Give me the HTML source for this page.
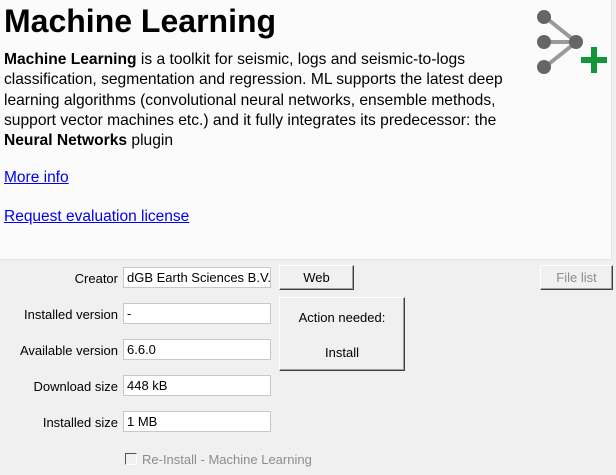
<!DOCTYPE html>
<html><head><style>
body{margin:0;width:616px;height:475px;background:#f0f0f0;font-family:"Liberation Sans",sans-serif;position:relative;overflow:hidden}
#top{position:absolute;left:0;top:0;width:611px;height:259px;background:#fbfbfb;border-right:1px solid #e3e3e3;border-bottom:1px solid #e3e3e3}
h1{position:absolute;left:4px;top:3px;margin:0;font-size:32px;font-weight:bold;color:#000}
.p{position:absolute;left:4px;top:50px;width:515px;font-size:15.6px;line-height:20.3px;color:#000}
a{color:#0000ee;text-decoration:underline;font-size:15.5px;position:absolute;left:4px}
.lab{position:absolute;right:498px;font-size:13px;color:#000;text-align:right}
.in{position:absolute;left:123px;width:143px;height:19px;background:#fff;border:1px solid #c8c8c8;font-size:13px;line-height:19px;padding-left:3px;overflow:hidden;white-space:nowrap}
.btn{position:absolute;background:#f0f0f0;border:1px solid;border-color:#fff #404040 #404040 #fff;box-shadow:inset -1px -1px #a0a0a0;font-size:13px;text-align:center}
</style></head><body>
<div id="top">
<h1>Machine Learning</h1>
<div class="p"><b>Machine Learning</b> is a toolkit for seismic, logs and seismic-to-logs classification, segmentation and regression. ML supports the latest deep learning algorithms (convolutional neural networks, ensemble methods, support vector machines etc.) and it fully integrates its predecessor: the <b>Neural Networks</b> plugin</div>
<a style="top:169px">More info</a>
<a style="top:208px">Request evaluation license</a>
<svg style="position:absolute;left:530px;top:5px" width="80" height="75">
<g stroke="#999" stroke-width="4"><line x1="15" y1="12" x2="45" y2="36"/><line x1="15" y1="37" x2="45" y2="37"/><line x1="15" y1="62" x2="45" y2="38"/></g>
<g fill="#666"><circle cx="14" cy="12" r="7"/><circle cx="14" cy="37" r="7"/><circle cx="14" cy="62" r="7"/><circle cx="46" cy="37" r="7"/></g>
<path d="M61 42h6v10h10v6h-10v10h-6v-10h-10v-6h10z" fill="#11963a"/>
</svg>
</div>
<div class="lab" style="top:271px">Creator</div>
<div class="lab" style="top:307px">Installed version</div>
<div class="lab" style="top:343px">Available version</div>
<div class="lab" style="top:379px">Download size</div>
<div class="lab" style="top:415px">Installed size</div>
<div class="in" style="top:267px">dGB Earth Sciences B.V.</div>
<div class="in" style="top:303px">-</div>
<div class="in" style="top:339px">6.6.0</div>
<div class="in" style="top:375px">448 kB</div>
<div class="in" style="top:411px">1 MB</div>
<div class="btn" style="left:279px;top:265px;width:73px;height:23px;line-height:23px">Web</div>
<div class="btn" style="left:279px;top:297px;width:124px;height:72px"><div style="margin-top:12px">Action needed:</div><div style="margin-top:20px">Install</div></div>
<div class="btn" style="left:540px;top:265px;width:71px;height:23px;line-height:23px;color:#8d8d8d">File list</div>
<div style="position:absolute;left:125px;top:453px;width:10px;height:10px;border:1px solid;border-color:#555 #fff #fff #555;background:#f0f0f0"></div>
<div style="position:absolute;left:142px;top:452px;font-size:13px;color:#8d8d8d">Re-Install - Machine Learning</div>
</body></html>
